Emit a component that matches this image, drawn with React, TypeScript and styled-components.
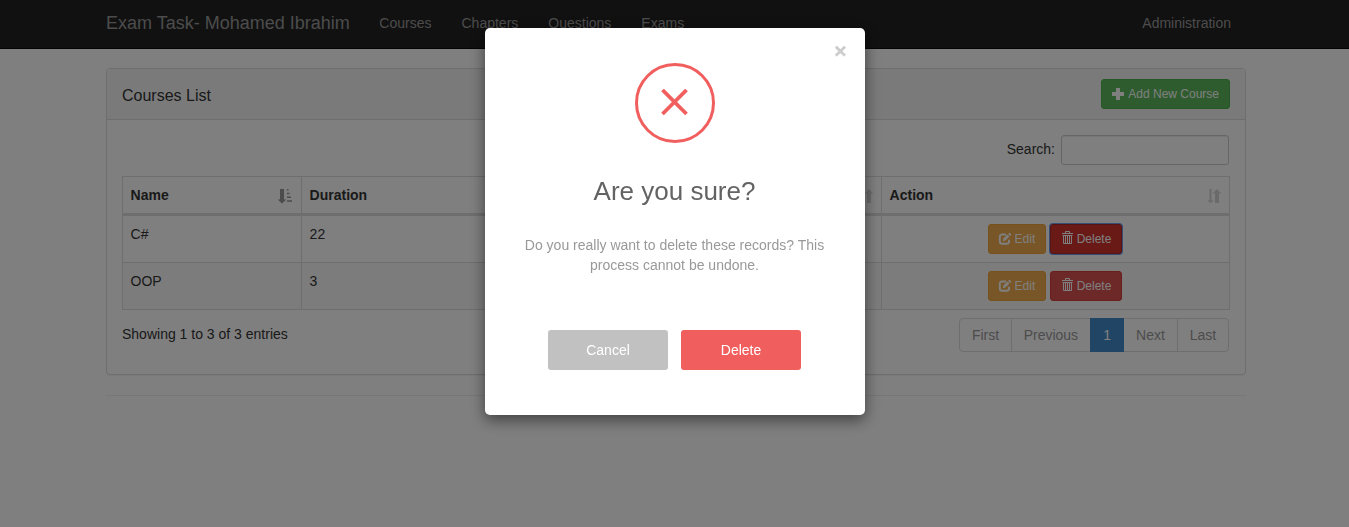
import React from "react";
import styled, { createGlobalStyle } from "styled-components";

const GlobalStyle = createGlobalStyle`
  *, *::before, *::after { box-sizing: border-box; }
  html, body { margin: 0; height: 100%; overflow: hidden; }
  body {
    background: #fff;
    color: #333;
    font-family: "Liberation Sans", Arial, sans-serif;
    font-size: 14px;
    line-height: 20px;
  }
`;

const Navbar = styled.nav`
  height: 49px;
  background: #222;
  border-bottom: 1px solid #080808;
`;

const Container = styled.div`
  width: 1140px;
  margin-left: 106px;
`;

const NavInner = styled(Container)`
  display: flex;
  align-items: center;
  height: 46px;
  color: #999;
`;

const Brand = styled.span`
  font-size: 18px;
  margin-right: 14.6px;
`;

const NavLink = styled.a<{ $end?: boolean }>`
  padding: 0 15px;
  margin-left: ${(p) => (p.$end ? "auto" : "0")};
`;

const Panel = styled.section`
  margin-top: 19px;
  height: 307px;
  border: 1px solid #ddd;
  border-radius: 4px;
  box-shadow: 0 1px 1px rgba(0, 0, 0, 0.05);
`;

const PanelHeading = styled.header`
  display: flex;
  align-items: center;
  justify-content: space-between;
  height: 51px;
  padding: 0 15px;
  background: #f5f5f5;
  border-bottom: 1px solid #ddd;
  border-radius: 3px 3px 0 0;
`;

const PanelTitle = styled.h3`
  margin: 4px 0 0;
  font-size: 16px;
  font-weight: 400;
`;

const PanelBody = styled.div`
  padding: 15px;
`;

const tones = {
  success: ["#5cb85c", "#4cae4c"],
  warning: ["#f0ad4e", "#eea236"],
  danger: ["#d9534f", "#d43f3a"],
  dangerActive: ["#d2322d", "#ac2925"],
};

const SmallButton = styled.button<{ $tone: keyof typeof tones }>`
  display: inline-flex;
  align-items: center;
  gap: ${(p) => (p.$tone === "success" ? "4px" : "3.4px")};
  height: 30px;
  padding: 0 10px;
  border: 1px solid ${(p) => tones[p.$tone][1]};
  border-radius: 3px;
  background: ${(p) => tones[p.$tone][0]};
  color: #fff;
  font: 12px/18px "Liberation Sans", Arial, sans-serif;
  white-space: nowrap;
  box-shadow: ${(p) => (p.$tone === "dangerActive" ? "0 0 0 1px #6f9fe8" : "none")};
  svg { flex: none; overflow: visible; }
`;

const SearchRow = styled.label`
  display: flex;
  justify-content: flex-end;
  align-items: center;
  gap: 6px;
  height: 30px;
  padding-right: 1px;
  margin-bottom: 11px;
`;

const SearchText = styled.span`
  position: relative;
  top: -1px;
`;

const SearchInput = styled.input`
  width: 168px;
  height: 30px;
  border: 1px solid #ccc;
  border-radius: 3px;
  background: #fff;
  box-shadow: inset 0 1px 1px rgba(0, 0, 0, 0.075);
`;

const Table = styled.table`
  width: 1108px;
  table-layout: fixed;
  border-collapse: separate;
  border-spacing: 0;
  border-top: 1px solid #ddd;
  border-left: 1px solid #ddd;
`;

const Th = styled.th<{ $sorted?: boolean }>`
  height: 39px;
  padding: 0 ${(p) => (p.$sorted ? 9 : 8)}px 0 7.6px;
  border-right: 1px solid #ddd;
  border-bottom: 3px solid #ddd;
  text-align: left;
`;

const ThContent = styled.div`
  display: flex;
  align-items: center;
  justify-content: space-between;
  svg { position: relative; top: 1px; }
`;

const Row = styled.tr<{ $shaded?: boolean }>`
  background: ${(p) => (p.$shaded ? "#f9f9f9" : "#fff")};
`;

const Td = styled.td`
  height: 47px;
  padding: 8px 8px 8px 7.6px;
  vertical-align: top;
  border-right: 1px solid #ddd;
  border-bottom: 1px solid #ddd;
`;

const Actions = styled.div`
  display: flex;
  justify-content: center;
  gap: 4px;
`;

const TableFooter = styled.div`
  display: flex;
  justify-content: space-between;
  padding: 8px 1px 0 0;
`;

const Info = styled.div`
  padding-top: 6px;
`;

const Pagination = styled.ul`
  display: flex;
  margin: 0;
  padding: 0;
  list-style: none;
`;

const Page = styled.li<{ $active?: boolean }>`
  height: 34px;
  padding: 6px ${(p) => (p.$active ? 12.2 : 11.9)}px;
  margin-left: -1px;
  border: 1px solid ${(p) => (p.$active ? "#428bca" : "#ddd")};
  background: ${(p) => (p.$active ? "#428bca" : "#fff")};
  color: ${(p) => (p.$active ? "#fff" : "#999")};
  position: relative;
  z-index: ${(p) => (p.$active ? 1 : 0)};
  &:first-child { padding: 6px 11.6px; border-radius: 4px 0 0 4px; }
  &:last-child { border-radius: 0 4px 4px 0; }
`;

const Divider = styled.hr`
  margin: 20px 0 0;
  border: 0;
  border-top: 1px solid #eee;
`;

const Backdrop = styled.div`
  position: fixed;
  inset: 0;
  z-index: 10;
  padding: 28px 0 0 485px;
  background: rgba(0, 0, 0, 0.5);
`;

const Dialog = styled.div`
  position: relative;
  display: flex;
  flex-direction: column;
  align-items: center;
  width: 380px;
  height: 387px;
  padding-top: 35px;
  border-radius: 5px;
  background: #fff;
  box-shadow: 0 5px 15px rgba(0, 0, 0, 0.5);
  color: #999;
  text-align: center;
`;

const Close = styled.button`
  position: absolute;
  top: 12px;
  right: 18.5px;
  padding: 0;
  border: 0;
  background: none;
  color: #ccc;
  -webkit-text-stroke: 0.4px #ccc;
  font: bold 21px/21px "Liberation Sans", Arial, sans-serif;
`;

const IconCircle = styled.div`
  display: flex;
  align-items: center;
  justify-content: center;
  width: 80px;
  height: 80px;
  border: 3px solid #f15e5e;
  border-radius: 50%;
`;

const DialogTitle = styled.h4`
  margin: 30px 1px 0 0;
  color: #636363;
  font-size: 26px;
  font-weight: 400;
  line-height: 36px;
`;

const Message = styled.p`
  width: 310px;
  margin: 26px 1px 0 0;
`;

const DialogActions = styled.div`
  display: flex;
  gap: 13px;
  margin: 55px 1px 0 0;
`;

const DialogButton = styled.button<{ $danger?: boolean }>`
  width: 120px;
  height: 40px;
  padding: 0;
  border: 0;
  border-radius: 3px;
  background: ${(p) => (p.$danger ? "#f15e5e" : "#c1c1c1")};
  color: #fff;
  font: 14px/20px "Liberation Sans", Arial, sans-serif;
`;

const PlusIcon = () => (
  <svg width="12" height="12" viewBox="0 0 12 12" fill="#fff">
    <path d="M4 0h4v4h4v4H8v4H4V8H0V4h4z" />
  </svg>
);

const EditIcon = () => (
  <svg width="12" height="12" viewBox="0 0 12 12">
    <path d="M7 1.5H3A2.2 2.2 0 0 0 .8 3.7v4.8A2.2 2.2 0 0 0 3 10.7h4.8A2.2 2.2 0 0 0 10 8.5V6.8" fill="none" stroke="#fff" strokeWidth="1.9" />
    <path d="M3.7 8.3l.7-2.7 4-4 2 2-4 4zM9.1 1l1-.9q.4-.3.8 0l1.2 1.1q.3.4 0 .8l-1 1z" fill="#fff" />
  </svg>
);

const TrashIcon = () => (
  <svg width="12" height="16" viewBox="0 0 12 16" fill="none" stroke="#fff">
    <path d="M4.5 2V.5h4V2" />
    <path d="M1 2.5h11" />
    <path d="M1.5 4.5h10" />
    <path d="M2.5 4v8.5h8V4" />
    <path d="M4.5 5v7M6.5 5v7M8.5 5v7" />
  </svg>
);

const SortIcon = () => (
  <svg width="14" height="15" viewBox="0 0 14 15" fill="#333" opacity=".2">
    <path d="M2.5 0h2v11.5H7L3.5 14 0 11.5h2.5zM8 14V4.5H5.7L10 0l4.2 4.5H12V14z" />
  </svg>
);

const SortedIcon = () => (
  <svg width="14" height="15" viewBox="0 0 14 15" fill="#333" opacity=".5">
    <path d="M2 0h4v10.5h2.3L4 14.5-.3 10.5H2zM9 0h1.5v1.5H9zM9 3.700h2.500v1.500H9zM9 7.500h4V9H9zM9 11.200h5v1.500H9z" />
  </svg>
);

const columns = [
  { title: "Name", width: 179 },
  { title: "Duration", width: 290 },
  { title: "", width: 290 },
  { title: "Action", width: 348 },
];

const courses = [
  { name: "C#", duration: 22 },
  { name: "OOP", duration: 3 },
];

export default function App() {
  return (
    <>
      <GlobalStyle />
      <Navbar>
        <NavInner>
          <Brand>Exam Task- Mohamed Ibrahim</Brand>
          <NavLink>Courses</NavLink>
          <NavLink>Chapters</NavLink>
          <NavLink>Questions</NavLink>
          <NavLink>Exams</NavLink>
          <NavLink $end>Administration</NavLink>
        </NavInner>
      </Navbar>

      <Container>
        <Panel>
          <PanelHeading>
            <PanelTitle>Courses List</PanelTitle>
            <SmallButton $tone="success">
              <PlusIcon /> Add New Course
            </SmallButton>
          </PanelHeading>
          <PanelBody>
            <SearchRow>
              <SearchText>Search:</SearchText>
              <SearchInput />
            </SearchRow>
            <Table>
              <colgroup>
                {columns.map((c, i) => (
                  <col key={i} width={c.width} />
                ))}
              </colgroup>
              <thead>
                <tr>
                  {columns.map((c, i) => (
                    <Th key={i} $sorted={i === 0}>
                      <ThContent>
                        <span>{c.title}</span>
                        {i === 0 ? <SortedIcon /> : <SortIcon />}
                      </ThContent>
                    </Th>
                  ))}
                </tr>
              </thead>
              <tbody>
                {courses.map((course, i) => (
                  <Row key={course.name} $shaded={i % 2 === 1}>
                    <Td>{course.name}</Td>
                    <Td>{course.duration}</Td>
                    <Td />
                    <Td>
                      <Actions>
                        <SmallButton $tone="warning">
                          <EditIcon /> Edit
                        </SmallButton>
                        <SmallButton $tone={i === 0 ? "dangerActive" : "danger"}>
                          <TrashIcon /> Delete
                        </SmallButton>
                      </Actions>
                    </Td>
                  </Row>
                ))}
              </tbody>
            </Table>
            <TableFooter>
              <Info>Showing 1 to 3 of 3 entries</Info>
              <Pagination>
                <Page>First</Page>
                <Page>Previous</Page>
                <Page $active>1</Page>
                <Page>Next</Page>
                <Page>Last</Page>
              </Pagination>
            </TableFooter>
          </PanelBody>
        </Panel>
        <Divider />
      </Container>

      <Backdrop>
        <Dialog role="dialog">
          <Close>×</Close>
          <IconCircle>
            <svg width="28" height="28" viewBox="0 0 28 28" stroke="#f15e5e" strokeWidth="3.8">
              <path d="M1.5 1L25.5 25M25.5 1L1.5 25" />
            </svg>
          </IconCircle>
          <DialogTitle>Are you sure?</DialogTitle>
          <Message>Do you really want to delete these records? This process cannot be undone.</Message>
          <DialogActions>
            <DialogButton>Cancel</DialogButton>
            <DialogButton $danger>Delete</DialogButton>
          </DialogActions>
        </Dialog>
      </Backdrop>
    </>
  );
}
